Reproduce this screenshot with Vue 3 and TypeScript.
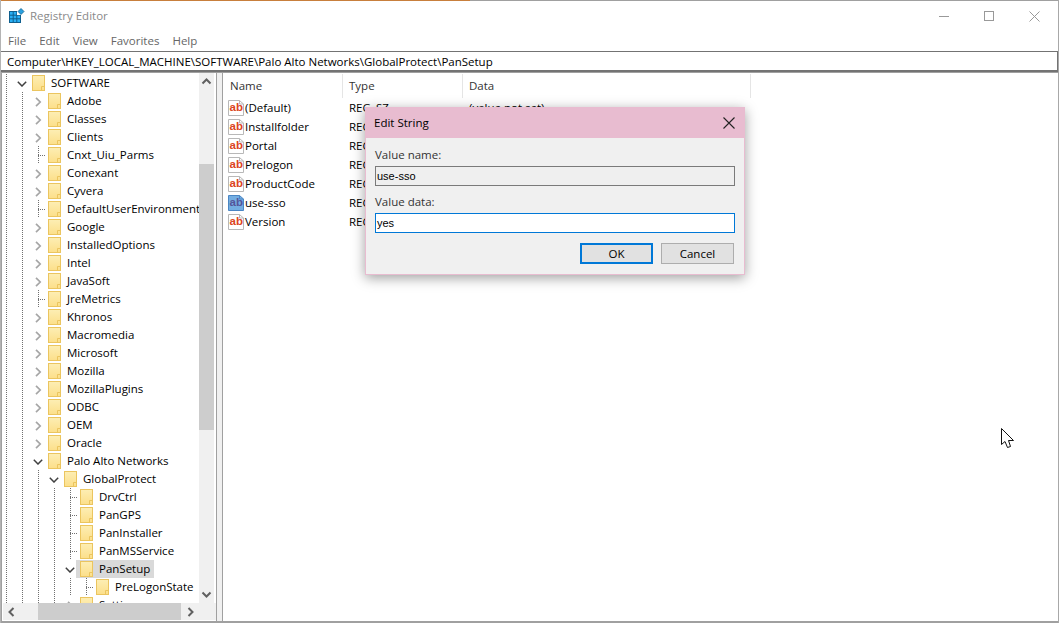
<script setup lang="ts">
type Cell = 'v' | 'r' | 'd' | 'e' | 'x'
interface Row { name: string; cells: Cell[]; sel?: boolean }

const mk = (name: string, cells: string, sel = false): Row => ({ name, cells: cells.split('') as Cell[], sel })

const rows: Row[] = [
  mk('SOFTWARE', 'vd'),
  mk('Adobe', 'vvr'),
  mk('Classes', 'vvr'),
  mk('Clients', 'vvr'),
  mk('Cnxt_Uiu_Parms', 'vve'),
  mk('Conexant', 'vvr'),
  mk('Cyvera', 'vvr'),
  mk('DefaultUserEnvironment', 'vve'),
  mk('Google', 'vvr'),
  mk('InstalledOptions', 'vvr'),
  mk('Intel', 'vvr'),
  mk('JavaSoft', 'vvr'),
  mk('JreMetrics', 'vve'),
  mk('Khronos', 'vvr'),
  mk('Macromedia', 'vvr'),
  mk('Microsoft', 'vvr'),
  mk('Mozilla', 'vvr'),
  mk('MozillaPlugins', 'vvr'),
  mk('ODBC', 'vvr'),
  mk('OEM', 'vvr'),
  mk('Oracle', 'vvr'),
  mk('Palo Alto Networks', 'vvd'),
  mk('GlobalProtect', 'vvvd'),
  mk('DrvCtrl', 'vvvve'),
  mk('PanGPS', 'vvvve'),
  mk('PanInstaller', 'vvvve'),
  mk('PanMSService', 'vvvve'),
  mk('PanSetup', 'vvvvd', true),
  mk('PreLogonState', 'vvvvve'),
  mk('Settings', 'vvvvr'),
]

const values = [
  { name: '(Default)', data: '(value not set)' },
  { name: 'Installfolder', data: '' },
  { name: 'Portal', data: '' },
  { name: 'Prelogon', data: '' },
  { name: 'ProductCode', data: '' },
  { name: 'use-sso', data: '', sel: true },
  { name: 'Version', data: '' },
]
const menus = ['File', 'Edit', 'View', 'Favorites', 'Help']
</script>

<template>
  <div class="app">
    <div class="topline"><span class="progress"></span></div>
    <header class="titlebar">
      <svg class="appicon" width="16" height="16" viewBox="0 0 16 16">
        <rect x="0.5" y="3.5" width="11" height="11" fill="#29b0f5" stroke="#0f5f8e" />
        <path d="M4.2 3.5V14.5M7.8 3.5V14.5M0.5 7.2H11.5M0.5 10.8H11.5" stroke="#0f5f8e" stroke-width="1" />
        <rect x="8" y="3" width="4" height="4" fill="#fff" />
        <path d="M12 0.5L15 3.5L12 6.5L9 3.5Z" fill="#29a0e0" stroke="#0f5f8e" stroke-width="0.8" />
      </svg>
      <span class="title">Registry Editor</span>
      <div class="winbtns">
        <svg width="10" height="10" viewBox="0 0 10 10"><path d="M0 5.5H10" stroke="#999" /></svg>
        <svg width="10" height="10" viewBox="0 0 10 10"><rect x="0.5" y="0.5" width="9" height="9" fill="none" stroke="#999" /></svg>
        <svg width="11" height="11" viewBox="0 0 11 11"><path d="M0.5 0.5L10.5 10.5M10.5 0.5L0.5 10.5" stroke="#999" /></svg>
      </div>
    </header>
    <nav class="menubar">
      <span v-for="m in menus" :key="m">{{ m }}</span>
    </nav>
    <div class="address">Computer\HKEY_LOCAL_MACHINE\SOFTWARE\Palo Alto Networks\GlobalProtect\PanSetup</div>

    <main class="panes">
      <section class="treepane">
        <div class="treetop">
          <div class="tree">
            <div v-for="r in rows" :key="r.name" class="row">
              <span v-for="(c, i) in r.cells" :key="i" class="cell" :class="'c-' + c">
                <svg v-if="c === 'r'" width="7" height="10" viewBox="0 0 7 10"><path d="M1 0.8L5.2 5L1 9.2" fill="none" stroke="#a6a6a6" stroke-width="1.7" /></svg>
                <svg v-if="c === 'd'" width="10" height="6" viewBox="0 0 10 6"><path d="M0.8 0.8L5 5L9.2 0.8" fill="none" stroke="#404040" stroke-width="1.5" /></svg>
              </span>
              <span class="item" :class="{ sel: r.sel }">
                <svg class="folder" width="13" height="16" viewBox="0 0 13 16">
                  <defs>
                    <linearGradient id="fg" x1="0" y1="0" x2="0" y2="1">
                      <stop offset="0" stop-color="#fdeeb4" />
                      <stop offset="1" stop-color="#fcdf8a" />
                    </linearGradient>
                  </defs>
                  <rect x="0.5" y="0.5" width="12" height="15" fill="url(#fg)" stroke="#ebc55f" />
                  <path d="M9.5 15.5V11.5H12.5" fill="none" stroke="#ebc55f" />
                </svg>
                <span class="label">{{ r.name }}</span>
              </span>
            </div>
          </div>
          <div class="vscroll">
            <svg class="arrow" width="15" height="17" viewBox="0 0 15 17"><path d="M3.5 10.5L7.5 6.5L11.5 10.5" fill="none" stroke="#606060" stroke-width="2" /></svg>
            <div class="vtrack"><div class="vthumb"></div></div>
            <svg class="arrow" width="15" height="17" viewBox="0 0 15 17"><path d="M3.5 6.5L7.5 10.5L11.5 6.5" fill="none" stroke="#606060" stroke-width="2" /></svg>
          </div>
        </div>
        <div class="hscroll">
          <svg class="arrow" width="17" height="16" viewBox="0 0 17 16"><path d="M10.5 4L6.5 8L10.5 12" fill="none" stroke="#606060" stroke-width="2" /></svg>
          <div class="hthumb"></div>
          <svg class="arrow" width="17" height="16" viewBox="0 0 17 16"><path d="M6.5 4L10.5 8L6.5 12" fill="none" stroke="#606060" stroke-width="2" /></svg>
          <span class="corner"></span>
        </div>
      </section>

      <section class="listpane">
        <div class="listhead">
          <span class="col1">Name</span>
          <span class="col2">Type</span>
          <span class="col3">Data</span>
        </div>
        <div v-for="v in values" :key="v.name" class="vrow">
          <span class="col1 vname">
            <svg class="abicon" width="16" height="17" viewBox="0 0 16 17">
              <path d="M0.5 1.5H11.5L15.5 5V16.5H0.5Z" :fill="v.sel ? '#74aee2' : '#fff'" :stroke="v.sel ? '#4a86c4' : '#b8b8b8'" />
              <path d="M11.5 1.5V5H15.5" fill="none" :stroke="v.sel ? '#4a86c4' : '#b8b8b8'" />
              <text x="1.5" y="12" class="abtext" :fill="v.sel ? '#55559a' : '#dc4522'">ab</text>
            </svg>
            {{ v.name }}
          </span>
          <span class="col2">REG_SZ</span>
          <span class="col3">{{ v.data }}</span>
        </div>
      </section>
    </main>

    <div class="dialog">
      <div class="dlgtitle">
        <span>Edit String</span>
        <svg width="12" height="12" viewBox="0 0 12 12"><path d="M0.5 0.5L11.5 11.5M11.5 0.5L0.5 11.5" stroke="#222" stroke-width="1.1" /></svg>
      </div>
      <div class="dlgbody">
        <label class="flabel">Value name:</label>
        <div class="field ro">use-sso</div>
        <label class="flabel second">Value data:</label>
        <div class="field active">yes</div>
        <div class="buttons">
          <button class="btn primary">OK</button>
          <button class="btn">Cancel</button>
        </div>
      </div>
    </div>

    <svg class="cursor" width="14" height="21" viewBox="0 0 14 21">
      <path d="M0.5 0.5V16.5L4 13.5L6.5 19.5L9.5 18.5L7.5 12.5H12.5Z" fill="#fff" stroke="#111" />
    </svg>
  </div>
</template>

<style>
html, body { margin: 0; background: #fff; }
</style>

<style scoped>
.app {
  position: relative;
  box-sizing: border-box;
  width: 1059px;
  height: 623px;
  overflow: hidden;
  display: flex;
  flex-direction: column;
  background: #fff;
  border-right: 1px solid #a8a8a8;
  border-left: 1px solid #b4b4b4;
  font: 11.5px/16px "Open Sans", "Noto Sans", "Liberation Sans", sans-serif;
  color: #000;
}
.topline { height: 1px; background: #a0a0a0; margin: 0 -1px; flex: none; }
.progress { display: block; width: 470px; height: 1px; background: #c87f3c; }
.titlebar { height: 30px; flex: none; display: flex; align-items: center; padding-left: 8px; }
.title { margin-left: 5px; color: #8a8a8a; }
.winbtns { margin-left: auto; display: flex; align-items: center; gap: 35px; padding-right: 18px; }
.menubar { height: 20px; flex: none; display: flex; gap: 13px; padding-left: 7px; align-items: center; color: #666; }
.address {
  height: 21px;
  flex: none;
  box-sizing: border-box;
  border: 1px solid #737373;
  border-bottom-width: 2px;
  margin-left: -1px;
  padding-left: 6px;
  line-height: 19px;
  white-space: nowrap;
}
.panes { flex: 1; min-height: 0; display: flex; background: #f0f0f0; border-top: 1px solid #a0a0a0; border-bottom: 2px solid #a0a0a0; }
.treepane { width: 216px; flex: none; box-sizing: border-box; border-left: 1px solid #a0a0a0; border-right: 1px solid #a0a0a0; display: flex; flex-direction: column; background: #fff; }
.treetop { flex: 1; min-height: 0; display: flex; }
.tree { flex: 1; min-width: 0; overflow: hidden; margin-left: -2px; padding-top: 1px; }
.row { height: 18px; display: flex; align-items: center; white-space: nowrap; }
.cell { width: 16px; height: 18px; flex: none; display: flex; align-items: center; }
.c-v, .c-e {
  background: repeating-linear-gradient(to bottom, #707070 0 1px, transparent 1px 2px) 6px 0 / 1px 100% no-repeat;
}
.c-e::after {
  content: "";
  display: block;
  width: 7px;
  height: 1px;
  margin-left: 6px;
  background: repeating-linear-gradient(to right, #707070 0 1px, transparent 1px 2px);
}
.c-r svg { margin-left: 3px; margin-top: 2px; }
.c-d svg { margin-left: 1px; margin-top: 1px; }
.item { display: flex; align-items: center; height: 18px; }
.item.sel { background: #d9d9d9; margin-left: -4px; padding: 0 4px; }
.folder { flex: none; }
.label { margin-left: 6px; }
.vscroll { width: 15px; flex: none; display: flex; flex-direction: column; background: #f0f0f0; margin-right: 2px; }
.arrow { flex: none; display: block; }
.vtrack { flex: 1; padding-top: 74px; padding-bottom: 156px; display: flex; }
.vthumb { flex: 1; background: #cdcdcd; }
.hscroll { height: 17px; flex: none; display: flex; align-items: center; background: #f0f0f0; margin-left: 1px; margin-bottom: 1px; }
.hthumb { width: 143px; height: 17px; margin-left: 18px; margin-right: 1px; background: #cdcdcd; }
.corner { flex: 1; }
.listpane { margin-left: 5px; flex: 1; min-width: 0; background: #fff; border-left: 1px solid #a0a0a0; }
.listhead { height: 25px; display: flex; align-items: center; }
.listhead .col1, .listhead .col2, .listhead .col3 { height: 24px; line-height: 24px; border-right: 1px solid #e5e5e5; box-sizing: border-box; }
.col1 { width: 120px; padding-left: 7px; box-sizing: border-box; flex: none; }
.col2 { width: 120px; padding-left: 6px; box-sizing: border-box; flex: none; }
.col3 { width: 288px; padding-left: 6px; box-sizing: border-box; flex: none; }
.listhead span { color: #333; }
.vrow { height: 19px; display: flex; align-items: center; white-space: nowrap; }
.vname { display: flex; align-items: center; padding-left: 5px; gap: 1px; }
.abicon { flex: none; }
.abtext { font: bold 11.5px "Liberation Sans", sans-serif; }
.dialog {
  position: absolute;
  left: 364px;
  top: 107px;
  width: 380px;
  height: 168px;
  box-sizing: border-box;
  border: 1px solid #e8bcd0;
  background: #f0f0f0;
  box-shadow: 0 3px 12px rgba(0, 0, 0, 0.38);
}
.dlgtitle { height: 30px; background: #e8bcd0; display: flex; align-items: center; justify-content: space-between; padding: 0 9px 0 8px; box-sizing: border-box; }
.dlgbody { padding: 9px 9px 0; display: flex; flex-direction: column; }
.flabel { height: 16px; margin-bottom: 3px; color: #333; }
.flabel.second { margin-top: 8px; }
.field { height: 20px; box-sizing: border-box; padding-left: 1px; font: 11px/18px "Liberation Sans", sans-serif; }
.field.ro { border: 1px solid #7a7a7a; background: #efefef; }
.field.active { border: 1px solid #0078d7; background: #fff; }
.buttons { margin-top: 10px; display: flex; justify-content: flex-end; gap: 8px; padding-right: 1px; }
.btn { width: 73px; height: 21px; box-sizing: border-box; padding: 0; border: 1px solid #adadad; background: #e1e1e1; font: inherit; color: #000; }
.btn.primary { border: 2px solid #0078d7; }
.cursor { position: absolute; left: 1000px; top: 428px; }
</style>
